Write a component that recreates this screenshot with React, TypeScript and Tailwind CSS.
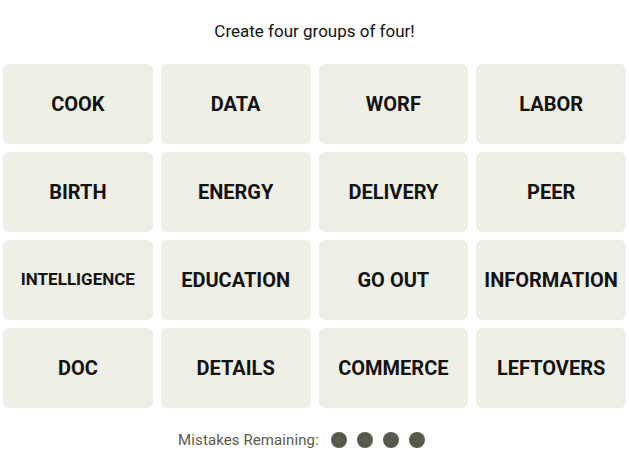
const words = [
  'COOK', 'DATA', 'WORF', 'LABOR',
  'BIRTH', 'ENERGY', 'DELIVERY', 'PEER',
  'INTELLIGENCE', 'EDUCATION', 'GO OUT', 'INFORMATION',
  'DOC', 'DETAILS', 'COMMERCE', 'LEFTOVERS',
];

function Tile({ word }: { word: string }) {
  const small = word.length > 11;
  return (
    <button
      type="button"
      className={
        'flex h-20 items-center justify-center rounded-md bg-[#efefe6] font-bold text-[#121212] ' +
        (small ? 'text-[17px]' : 'text-[20px]')
      }
    >
      {word}
    </button>
  );
}

export default function App() {
  return (
    <div className="w-[629px] bg-white px-[3px]" style={{ fontFamily: 'Roboto, "Liberation Sans", sans-serif' }}>
      <p className="mt-[19px] mb-[21px] text-center text-[17px] leading-6 text-[#121212]">Create four groups of four!</p>
      <div className="grid grid-cols-4 gap-2">
        {words.map((w) => (
          <Tile key={w} word={w} />
        ))}
      </div>
      <div className="mt-[20px] flex items-center justify-center gap-[10px] pr-[26px] text-[15px] leading-6 text-[#5a594e]">
        <span className="mr-[2px] tracking-[0.1px]">Mistakes Remaining:</span>
        <span className="h-4 w-4 rounded-full bg-[#5a594e]" />
        <span className="h-4 w-4 rounded-full bg-[#5a594e]" />
        <span className="h-4 w-4 rounded-full bg-[#5a594e]" />
        <span className="h-4 w-4 rounded-full bg-[#5a594e]" />
      </div>
    </div>
  );
}
